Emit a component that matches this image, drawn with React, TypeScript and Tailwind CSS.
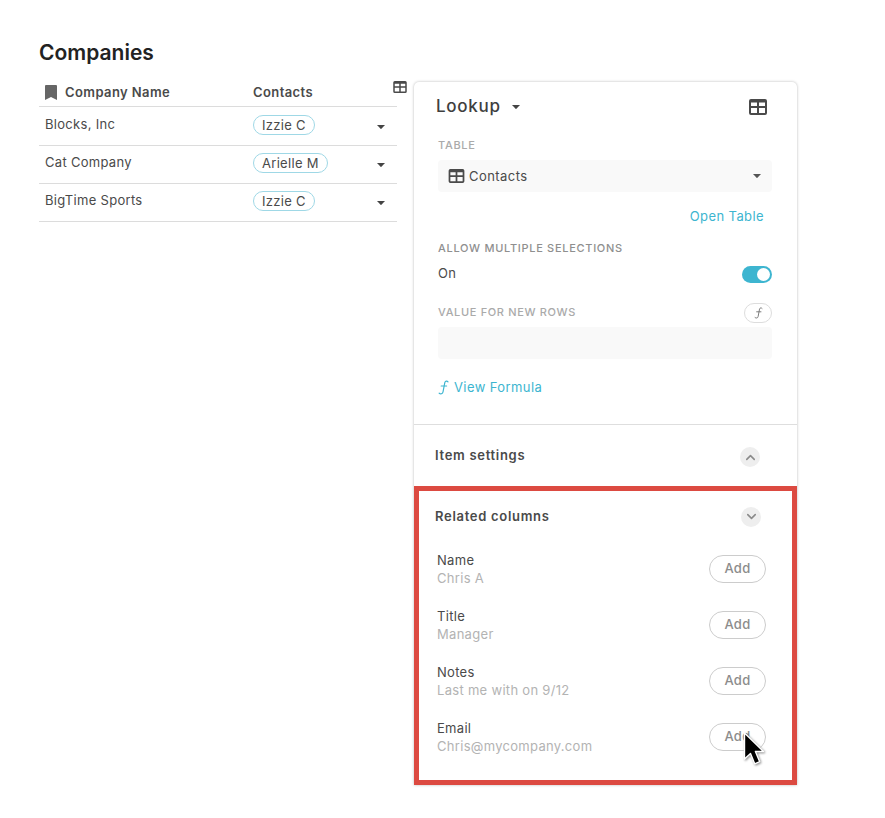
import { ChevronDown, ChevronUp } from "lucide-react";

const companies = [
  { name: "Blocks, Inc", contact: "Izzie C" },
  { name: "Cat Company", contact: "Arielle M" },
  { name: "BigTime Sports", contact: "Izzie C" },
];

const related = [
  { label: "Name", value: "Chris A" },
  { label: "Title", value: "Manager" },
  { label: "Notes", value: "Last me with on 9/12" },
  { label: "Email", value: "Chris@mycompany.com" },
];

function Caret({ className }: { className?: string }) {
  return (
    <svg viewBox="0 0 8 4" className={className} fill="currentColor">
      <path d="M0 0h8L4.4 3.8a.6.6 0 0 1-.8 0z" />
    </svg>
  );
}

function TableIcon({ className }: { className?: string }) {
  return (
    <svg viewBox="0 0 18 16" className={className} fill="currentColor" fillRule="evenodd">
      <path d="M2 0h14a2 2 0 0 1 2 2v12a2 2 0 0 1-2 2H2a2 2 0 0 1-2-2V2a2 2 0 0 1 2-2zM2 3.6v3.5h6V3.6zM10 3.6v3.5h6V3.6zM2 9v5h6V9zM10 9v5h6V9z" />
    </svg>
  );
}

function FormulaIcon({ className }: { className?: string }) {
  return (
    <svg viewBox="0 0 11 15" className={className} fill="none" stroke="currentColor" strokeWidth="1.2" strokeLinecap="round">
      <path d="M10 1.8C9 .6 7.2.9 6.8 2.6L5 12C4.6 13.9 2.6 14.4 1.2 13.2" />
      <path d="M3.2 6h5.4" />
    </svg>
  );
}

export default function App() {
  return (
    <div className="relative flex min-h-[818px] bg-white pl-[39px] pt-[82px] font-['Inter',sans-serif] text-[13px] tracking-[0.3px] text-[#4a4a4a]">
      <h1 className="absolute left-[39px] top-[40px] text-[21px] font-semibold leading-[26px] tracking-normal text-[#222222]">Companies</h1>

      <div className="w-[358px] shrink-0">
        <div className="flex h-[25px] items-start border-b border-[#dcdcdc] pt-[1px] font-semibold leading-[18px] tracking-[0.4px]">
          <div className="flex w-[214px] items-center pl-[6px]">
            <svg viewBox="0 0 12 15" className="mr-[8px] h-[15px] w-[12px]" fill="#666666">
              <path d="M1 0h10a1 1 0 0 1 1 1v14l-6-3-6 3V1a1 1 0 0 1 1-1z" />
            </svg>
            Company Name
          </div>
          <div>Contacts</div>
        </div>
        <div>
          {companies.map((company, index) => (
            <div key={index} className="flex h-[38px] items-start border-b border-[#dcdcdc] pt-[7px] leading-[18px] first:h-[39px] first:pt-[8px]">
              <div className="w-[214px] pl-[6px]">{company.name}</div>
              <div className="flex flex-1 items-center pr-[12px]">
                <span className="flex h-[20px] items-center rounded-full border border-[#9fd8e6] px-[8px] leading-none">{company.contact}</span>
                <Caret className="ml-auto mt-[3px] h-[4px] w-[8px] text-[#444444]" />
              </div>
            </div>
          ))}
        </div>
      </div>

      <TableIcon className="absolute left-[393px] top-[81px] h-[12px] w-[14px] text-[#4a4a4a]" />

      <div className="ml-[17px] h-[703px] w-[383px] shrink-0 rounded-t-[5px] bg-white shadow-[0_0_3px_rgba(0,0,0,0.28)]">
        <div className="h-[343px] border-b border-[#dedede] pl-[22px] pr-[25px]">
          <div className="flex h-[48px] items-center pt-[1px]">
            <span className="text-[17px] font-medium tracking-[0.7px] text-[#3f3f3f]">Lookup</span>
            <Caret className="ml-[11px] h-[4px] w-[8px] text-[#444444]" />
            <TableIcon className="ml-auto mr-[5px] h-[16px] w-[18px] text-[#4a4a4a]" />
          </div>
          <div className="pl-[2px]">
            <div className="mt-[8px] text-[11px] font-medium leading-[14px] tracking-[0.7px] text-[#aaaaaa]">TABLE</div>
            <div className="mt-[8px] flex h-[32px] items-center rounded-[4px] bg-[#f9f9f9] pl-[10px] pr-[11px] tracking-[0.45px]">
              <TableIcon className="mr-[4px] h-[14px] w-[17px] text-[#4a4a4a]" />
              <span className="pt-[1px]">Contacts</span>
              <Caret className="ml-auto h-[4px] w-[8px] text-[#555555]" />
            </div>
            <div className="mt-[15px] pr-[8px] text-right leading-[18px] tracking-[0.4px] text-[#3db5d0]">Open Table</div>
            <div className="mt-[16px] text-[11px] font-medium leading-[14px] tracking-[0.7px] text-[#8f8f8f]">ALLOW MULTIPLE SELECTIONS</div>
            <div className="mt-[10px] flex items-start justify-between leading-[16px]">
              On
              <span className="mt-[1px] flex h-[17px] w-[30px] items-center justify-end rounded-full bg-[#3db5d0] pr-[2px]">
                <span className="h-[13px] w-[13px] rounded-full bg-white" />
              </span>
            </div>
            <div className="mt-[18px] flex h-[23px] items-center justify-between">
              <span className="text-[11px] font-medium tracking-[0.65px] text-[#aaaaaa]">VALUE FOR NEW ROWS</span>
              <span className="flex h-[20px] w-[28px] items-center justify-center rounded-full border border-[#dddddd]">
                <FormulaIcon className="h-[12px] w-[9px] text-[#777777]" />
              </span>
            </div>
            <div className="mt-[3px] h-[32px] rounded-[4px] bg-[#f9f9f9]" />
            <div className="mt-[19px] flex items-center leading-[18px] tracking-[0.4px] text-[#3db5d0]">
              <FormulaIcon className="mr-[5px] h-[15px] w-[11px]" />
              View Formula
            </div>
          </div>
        </div>

        <div className="flex h-[61px] items-center justify-between pl-[21px] pr-[37px]">
          <span className="font-semibold tracking-[0.7px]">Item settings</span>
          <span className="mt-[3px] flex h-[20px] w-[20px] items-center justify-center rounded-full bg-[#eeeeee]">
            <ChevronUp size={15} strokeWidth={2.5} className="text-[#8a8a8a]" />
          </span>
        </div>

        <div className="h-[299px] border-[5px] border-[#dc4a41] pl-[18px] pr-[26px]">
          <div className="flex h-[49px] items-center justify-between pt-[2px]">
            <span className="-ml-[2px] font-semibold tracking-[0.7px]">Related columns</span>
            <span className="mr-[5px] flex h-[20px] w-[20px] items-center justify-center rounded-full bg-[#eeeeee]">
              <ChevronDown size={15} strokeWidth={2.5} className="text-[#8a8a8a]" />
            </span>
          </div>
          <div className="flex flex-col gap-[20px] pt-[11px]">
            {related.map((item) => (
              <div key={item.label} className="flex h-[36px] items-center justify-between">
                <div className="leading-[18px]">
                  <div>{item.label}</div>
                  <div className="text-[#b3b3b3]">{item.value}</div>
                </div>
                <button className="mb-[1px] flex h-[28px] w-[57px] items-center justify-center rounded-full border border-[#cccccc] pt-[1px] font-medium text-[#8c8c8c]">Add</button>
              </div>
            ))}
          </div>
        </div>
      </div>

      {/* pointer over the last Add button */}
      <svg viewBox="0 0 22 36" className="absolute left-[743px] top-[731px] h-[37px] w-[22px] drop-shadow-[1px_1px_1px_rgba(0,0,0,0.45)]">
        <path d="M1.5 1.5v26l6-5.6 4.2 10.4 5-2.1-4.3-10.2h8.1z" fill="#000000" stroke="#ffffff" strokeWidth="1.4" strokeLinejoin="round" />
      </svg>
    </div>
  );
}
